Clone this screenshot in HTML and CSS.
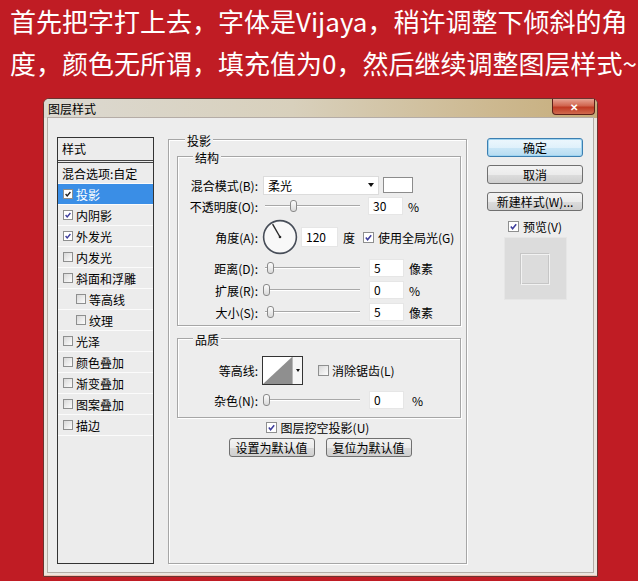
FILE: index.html
```html
<!DOCTYPE html>
<html lang="zh-CN">
<head>
    <meta charset="UTF-8">
    <title>图层样式</title>
    <link rel="stylesheet" href="styles.css">
</head>
<body>

<div class="caption">
    <p>首先把字打上去，字体是Vijaya，稍许调整下倾斜的角</p>
    <p>度，颜色无所谓，填充值为0，然后继续调整图层样式~</p>
</div>

<div class="dialog">
    <div class="titlebar">
        <span class="title">图层样式</span>
        <div class="close">&#x2715;</div>
    </div>

    <div class="client">
        <!-- Left: list of effects -->
        <div class="style-list">
            <div class="list-head">样式</div>
            <div class="item plain">混合选项:自定</div>
            <div class="item selected"><span class="cb small checked"><svg viewBox="0 0 10 10"><path d="M2 5 L4 7.5 L8 2.5" /></svg></span>投影</div>
            <div class="item"><span class="cb small checked"><svg viewBox="0 0 10 10"><path d="M2 5 L4 7.5 L8 2.5" /></svg></span>内阴影</div>
            <div class="item"><span class="cb small checked"><svg viewBox="0 0 10 10"><path d="M2 5 L4 7.5 L8 2.5" /></svg></span>外发光</div>
            <div class="item"><span class="cb small"></span>内发光</div>
            <div class="item"><span class="cb small"></span>斜面和浮雕</div>
            <div class="item sub"><span class="cb small"></span>等高线</div>
            <div class="item sub"><span class="cb small"></span>纹理</div>
            <div class="item"><span class="cb small"></span>光泽</div>
            <div class="item"><span class="cb small"></span>颜色叠加</div>
            <div class="item"><span class="cb small"></span>渐变叠加</div>
            <div class="item"><span class="cb small"></span>图案叠加</div>
            <div class="item"><span class="cb small"></span>描边</div>
        </div>

        <!-- Middle: drop shadow settings -->
        <div class="panel">
            <div class="group-title outer-title">投影</div>

            <div class="group">
                <div class="group-title">结构</div>
                <div class="rows">
                    <div class="row r-blend">
                        <span class="label">混合模式(B):</span>
                        <div class="select"><span>柔光</span><i class="arrow"></i></div>
                        <div class="swatch"></div>
                    </div>
                    <div class="row r-opacity">
                        <span class="label">不透明度(O):</span>
                        <div class="slider"><span class="thumb" style="margin-left: 27px"></span></div>
                        <div class="field">30</div>
                        <span class="unit">%</span>
                    </div>
                    <div class="row r-angle">
                        <span class="label">角度(A):</span>
                        <svg class="dial" width="36" height="36" viewBox="0 0 36 36">
                            <circle cx="18" cy="18" r="16.4" fill="#f8f8f8" stroke="#474d58" stroke-width="1.6"/>
                            <line x1="18" y1="18" x2="10.6" y2="5.2" stroke="#2a2a2a" stroke-width="1.4"/>
                            <circle cx="18" cy="18" r="1.3" fill="#2a2a2a"/>
                        </svg>
                        <div class="field wide">120</div>
                        <span class="unit">度</span>
                        <span class="cb checked global"><svg viewBox="0 0 10 10"><path d="M2 5 L4 7.5 L8 2.5" /></svg></span>
                        <span>使用全局光(G)</span>
                    </div>
                    <div class="row">
                        <span class="label">距离(D):</span>
                        <div class="slider"><span class="thumb" style="margin-left: 4px"></span></div>
                        <div class="field gap7">5</div>
                        <span class="unit">像素</span>
                    </div>
                    <div class="row">
                        <span class="label">扩展(R):</span>
                        <div class="slider"><span class="thumb" style="margin-left: 0px"></span></div>
                        <div class="field gap7">0</div>
                        <span class="unit">%</span>
                    </div>
                    <div class="row">
                        <span class="label">大小(S):</span>
                        <div class="slider"><span class="thumb" style="margin-left: 4px"></span></div>
                        <div class="field gap7">5</div>
                        <span class="unit">像素</span>
                    </div>
                </div>
            </div>

            <div class="group quality">
                <div class="group-title">品质</div>
                <div class="row r-contour">
                    <span class="label">等高线:</span>
                    <div class="contour">
                        <div class="curve">
                            <svg width="29" height="27" viewBox="0 0 29 27"><polygon points="0,27 29,0 29,27" fill="#8f8f8f"/></svg>
                        </div>
                        <div class="contour-arrow"><i class="arrow"></i></div>
                    </div>
                    <span class="cb"></span>
                    <span>消除锯齿(L)</span>
                </div>
                <div class="row r-noise">
                    <span class="label">杂色(N):</span>
                    <div class="slider"><span class="thumb" style="margin-left: 0px"></span></div>
                    <div class="field gap7">0</div>
                    <span class="unit wide-gap">%</span>
                </div>
            </div>

            <div class="knockout">
                <span class="cb checked"><svg viewBox="0 0 10 10"><path d="M2 5 L4 7.5 L8 2.5" /></svg></span>
                <span>图层挖空投影(U)</span>
            </div>
            <div class="default-buttons">
                <div class="btn small-btn">设置为默认值</div>
                <div class="btn small-btn">复位为默认值</div>
            </div>
        </div>

        <!-- Right: dialog buttons -->
        <div class="side">
            <div class="btn default">确定</div>
            <div class="btn">取消</div>
            <div class="btn">新建样式(W)...</div>
            <div class="preview-check">
                <span class="cb checked"><svg viewBox="0 0 10 10"><path d="M2 5 L4 7.5 L8 2.5" /></svg></span>
                <span>预览(V)</span>
            </div>
            <div class="preview">
                <div class="preview-inner"></div>
            </div>
        </div>
    </div>
</div>

</body>
</html>
```

FILE: styles.css
```css
body {
    margin: 0;
    background: #c01c24;
    font-family: "Noto Sans CJK SC", sans-serif;
    overflow: hidden;
}
.caption {
    padding-left: 10px;
    color: #fff;
    font-size: 26px;
    line-height: 42px;
    white-space: nowrap;
}
.caption p {
    margin: 0;
}

/* window frame */
.dialog {
    width: 555px;
    height: 479px;
    box-sizing: border-box;
    margin: 14px 0 0 43px;
    padding: 0 4px 4px;
    border: 1px solid #6a3430;
    border-radius: 6px 6px 0 0;
    background: #ebe5df;
    box-shadow: inset 0 -1px 0 #f1c2b4;
    display: flex;
    flex-direction: column;
    font-size: 12px;
    color: #000;
}
.titlebar {
    height: 19px;
    margin: 0 -4px;
    padding: 0 2px 0 4px;
    display: flex;
    align-items: center;
    border-radius: 5px 5px 0 0;
    background: linear-gradient(to right, #dcd9d1 0%, #d8d0bc 45%, #cdb991 80%, #c6ad7b 100%);
}
.close {
    align-self: flex-start;
    margin-left: auto;
    width: 43px;
    height: 16px;
    box-sizing: border-box;
    border: 1px solid #5c2019;
    border-top: none;
    border-radius: 0 0 4px 4px;
    background: linear-gradient(#e7a393, #d0654f 45%, #bf3a24 55%, #d06a4e);
    color: #fff;
    font-size: 10px;
    font-weight: bold;
    line-height: 15px;
    text-align: center;
}
.client {
    flex: 1;
    display: flex;
    padding: 19px 0 8px 9px;
    background: #ededed;
    box-shadow: 0 0 0 1px #b4aca6;
}

/* style list */
.style-list {
    width: 97px;
    box-sizing: border-box;
    border: 1px solid #333;
    background: #ececec;
}
.list-head {
    height: 22px;
    line-height: 22px;
    padding-left: 4px;
    border-bottom: 3px double #444;
}
.item {
    height: 20px;
    display: flex;
    align-items: center;
    gap: 3px;
    padding-left: 5px;
    border-bottom: 1px solid #fbfbfb;
    white-space: nowrap;
}
.item.plain {
    padding-left: 4px;
}
.item.sub {
    padding-left: 18px;
}
.item.selected {
    background: #3a8ee6;
    color: #fff;
}

/* checkboxes */
.cb {
    width: 11px;
    height: 11px;
    box-sizing: border-box;
    border: 1px solid #8e8f8f;
    background: linear-gradient(135deg, #d8d8d8, #fdfdfd);
    display: inline-flex;
    flex-shrink: 0;
}
.cb.small {
    width: 10px;
    height: 10px;
}
.cb.checked {
    background: #fff;
}
.cb svg {
    width: 100%;
    height: 100%;
}
.cb path {
    fill: none;
    stroke: #3d3d9c;
    stroke-width: 1.7;
}
.selected .cb path {
    stroke: #222;
}

/* group boxes */
.panel {
    width: 299px;
    box-sizing: border-box;
    margin: 2px 0 0 14px;
    border: 1px solid #a6a6a6;
    box-shadow: inset 1px 1px 0 #fff, 1px 1px 0 #fff;
}
.group-title {
    width: fit-content;
    margin: -6px 0 0 15px;
    padding: 0 2px;
    line-height: 14px;
    background: #ededed;
}
.outer-title {
    margin-left: 16px;
}
.group {
    margin: 8px 5px 0 8px;
    padding-bottom: 2px;
    border: 1px solid #a6a6a6;
    box-shadow: inset 1px 1px 0 #fff, 1px 1px 0 #fff;
}
.rows {
    margin-top: 10px;
}
.row {
    height: 22px;
    display: flex;
    align-items: center;
    white-space: nowrap;
}
.row.r-blend {
    height: 20px;
}
.row.r-angle {
    height: 40px;
}
.label {
    width: 80px;
    margin-right: 5px;
    text-align: right;
    flex-shrink: 0;
}
.select {
    width: 116px;
    height: 19px;
    box-sizing: border-box;
    padding-left: 4px;
    display: flex;
    align-items: center;
    background: #fff;
    border: 1px solid #dcdcdc;
}
.arrow {
    width: 0;
    height: 0;
    border-top: 4px solid #111;
    border-left: 3.5px solid transparent;
    border-right: 3.5px solid transparent;
}
.select .arrow {
    margin: 0 4px 0 auto;
}
.swatch {
    width: 30px;
    height: 16px;
    box-sizing: border-box;
    margin-left: 4px;
    background: #fff;
    border: 1px solid #8c8c8c;
}
.slider {
    width: 99px;
    height: 14px;
    display: flex;
    align-items: center;
    background:
        linear-gradient(#a8a8a8, #a8a8a8) no-repeat 2px 6px / 95px 1px,
        linear-gradient(#fff, #fff) no-repeat 2px 7px / 95px 1px;
}
.thumb {
    width: 7px;
    height: 12px;
    box-sizing: border-box;
    border: 1px solid #8a8a8a;
    border-radius: 3px;
    background: linear-gradient(#fdfdfd, #dadada);
}
.field {
    width: 35px;
    height: 18px;
    box-sizing: border-box;
    margin-left: 6px;
    padding-left: 4px;
    line-height: 16px;
    background: #fff;
    border: 1px solid #e6e6e6;
}
.field.gap7 {
    margin-left: 7px;
}
.field.wide {
    width: 37px;
    height: 20px;
    line-height: 18px;
    margin-left: 3px;
}
.unit {
    margin-left: 5px;
}
.unit.wide-gap {
    margin-left: 8px;
}
.dial {
    margin-left: -1px;
}
.cb.global {
    margin: 0 4px 0 8px;
}

/* quality group */
.quality {
    margin-top: 12px;
    padding-bottom: 7px;
}
.row.r-contour {
    height: 28px;
    margin-top: 9px;
}
.r-contour .label {
    margin-right: 4px;
}
.contour {
    width: 41px;
    height: 29px;
    box-sizing: border-box;
    display: flex;
    background: #fff;
    border: 1px solid #333;
}
.curve {
    width: 29px;
    display: flex;
    align-items: flex-end;
}
.contour-arrow {
    flex: 1;
    display: flex;
    align-items: center;
    justify-content: center;
    border-left: 1px solid #b8b8b8;
    background: #f6f6f6;
}
.contour-arrow .arrow {
    border-top-width: 3px;
    border-left-width: 2.5px;
    border-right-width: 2.5px;
}
.r-contour .cb {
    margin: 0 3px 0 15px;
}
.row.r-noise {
    height: 20px;
    margin-top: 6px;
}

.knockout {
    height: 16px;
    margin-top: 1px;
    display: flex;
    align-items: center;
    justify-content: center;
    gap: 4px;
}
.default-buttons {
    margin-top: 3px;
    display: flex;
    justify-content: center;
    gap: 11px;
    padding-left: 5px;
}

/* buttons */
.btn {
    width: 96px;
    height: 19px;
    box-sizing: border-box;
    border: 1px solid #707070;
    border-radius: 3px;
    background: linear-gradient(#f3f3f3 0%, #ebebeb 50%, #dcdcdc 51%, #cfcfcf 100%);
    line-height: 17px;
    text-align: center;
    white-space: nowrap;
}
.btn.small-btn {
    width: 86px;
}
.btn.default {
    border-color: #3c7fb1;
    background: linear-gradient(#edf7fd 0%, #e0f1fb 50%, #cbe7f7 51%, #b7dcf1 100%);
    box-shadow: inset 0 0 0 1px #9fd4f1;
}
.side {
    width: 96px;
    margin: 1px 0 0 20px;
    display: flex;
    flex-direction: column;
    align-items: center;
    gap: 8px;
}
.preview-check {
    height: 14px;
    display: flex;
    align-items: center;
    gap: 4px;
}
.preview {
    width: 63px;
    height: 63px;
    box-sizing: border-box;
    margin-top: -4px;
    display: flex;
    align-items: center;
    justify-content: center;
    background: #dcdcdc;
    border: 1px solid #e6e6e6;
}
.preview-inner {
    width: 30px;
    height: 32px;
    box-sizing: border-box;
    border: 1px solid;
    border-color: #c6c6c6 #f2f2f2 #f2f2f2 #c6c6c6;
    box-shadow: inset 1px 1px 0 #f2f2f2, inset -1px -1px 0 #c6c6c6;
}
```
